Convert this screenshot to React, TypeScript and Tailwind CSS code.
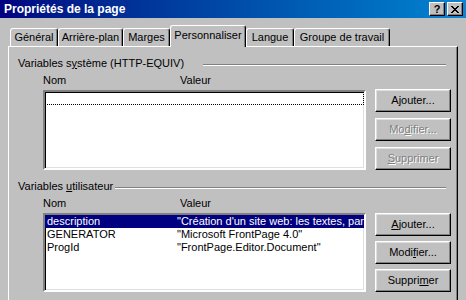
import type { ReactNode } from 'react'

const font = "font-['Liberation_Sans',Arial,sans-serif]"

const tabs = [
  { name: 'Général', w: 'w-[48px]' },
  { name: 'Arrière-plan', w: 'w-[65px]' },
  { name: 'Marges', w: 'w-[47px]' },
  { name: 'Personnaliser', w: 'w-[76px]', active: true },
  { name: 'Langue', w: 'w-[48px]' },
  { name: 'Groupe de travail', w: 'w-[96px]' },
]

const userVars = [
  { name: 'description', value: '"Création d\'un site web: les textes, paragraphes et titres"' },
  { name: 'GENERATOR', value: '"Microsoft FrontPage 4.0"' },
  { name: 'ProgId', value: '"FrontPage.Editor.Document"' },
]

function Btn({ children, disabled }: { children: ReactNode; disabled?: boolean }) {
  return (
    <div
      className={`flex h-[23px] w-[76px] items-center justify-center border border-t-white border-l-white border-r-black border-b-black bg-[#c0c0c0] text-[11px] leading-[13px] shadow-[inset_-1px_-1px_#808080,inset_1px_1px_#dfdfdf] ${
        disabled ? 'text-[#808080] [text-shadow:1px_1px_0_#fff]' : 'text-black'
      }`}
    >
      {children}
    </div>
  )
}

function GroupHeader({ children, gap }: { children: ReactNode; gap: string }) {
  return (
    <div className="mr-[11px] flex items-center">
      <span className="text-[11px] leading-[13px] whitespace-nowrap">{children}</span>
      <div className={`mt-[2px] h-[2px] flex-1 border-t border-t-[#808080] border-b border-b-white ${gap}`} />
    </div>
  )
}

function ColumnHeads() {
  return (
    <div className="mt-[4px] flex pl-[25px] text-[11px] leading-[13px]">
      <span className="w-[137px]">Nom</span>
      <span>Valeur</span>
    </div>
  )
}

export default function App() {
  return (
    <div className={`h-[300px] w-[466px] overflow-hidden bg-[#c0c0c0] text-black ${font}`}>
      {/* Title bar */}
      <div className="flex h-[18px] items-center bg-linear-to-r from-[#000080] to-[#1084d0] pr-[3px] pl-[4px]">
        <span className="flex-1 text-[12px] leading-none font-bold text-white">Propriétés de la page</span>
        <div className="flex gap-[2px]">
          <div className="flex h-[14px] w-[16px] items-center justify-center border border-t-white border-l-white border-r-black border-b-black bg-[#c0c0c0] text-[11px] leading-none font-bold shadow-[inset_-1px_-1px_#808080]">
            ?
          </div>
          <div className="flex h-[14px] w-[16px] items-center justify-center border border-t-white border-l-white border-r-black border-b-black bg-[#c0c0c0] shadow-[inset_-1px_-1px_#808080]">
            <svg width="8" height="7" viewBox="0 0 8 7" shapeRendering="crispEdges">
              <path d="M0 0h2v1h-2zM6 0h2v1h-2zM1 1h2v1h-2zM5 1h2v1h-2zM2 2h4v1h-4zM3 3h2v1h-2zM2 4h4v1h-4zM1 5h2v1h-2zM5 5h2v1h-2zM0 6h2v1h-2zM6 6h2v1h-2z" fill="#000" />
            </svg>
          </div>
        </div>
      </div>

      <div className="px-[8px]">
        {/* Tabs */}
        <div className="flex h-[28px] items-end pl-[2px]">
          {tabs.map((t) =>
            t.active ? (
              <div
                key={t.name}
                className={`relative z-10 -mb-[1px] flex h-[22px] justify-center rounded-t-[3px] border-t border-r border-l border-t-white border-r-black border-l-white bg-[#c0c0c0] pt-[3px] text-[11px] leading-[13px] shadow-[inset_-1px_0_#808080] ${t.w}`}
              >
                {t.name}
              </div>
            ) : (
              <div
                key={t.name}
                className={`flex h-[18px] items-center justify-center rounded-t-[3px] border-t border-r border-l border-t-white border-r-black border-l-white text-[11px] leading-[13px] shadow-[inset_-1px_0_#808080] ${t.w}`}
              >
                {t.name}
              </div>
            ),
          )}
        </div>

        {/* Panel */}
        <div className="h-[270px] border-t border-r border-l border-t-white border-r-black border-l-white pt-[10px] pl-[9px] shadow-[inset_-1px_0_#808080]">
          <GroupHeader gap="ml-[19px]">
            Variables s<u className="underline-offset-[1px]">y</u>stème (HTTP-EQUIV)
          </GroupHeader>
          <ColumnHeads />
          <div className="mt-[2px] flex pl-[25px]">
            <div className="mt-[1px] h-[80px] w-[323px] border-2 border-t-[#808080] border-r-white border-b-white border-l-[#808080] bg-white shadow-[inset_1px_1px_#000,inset_-1px_-1px_#dfdfdf]">
              <div className="h-[13px] border border-dotted border-black" />
            </div>
            <div className="ml-[9px] flex flex-col gap-[6px]">
              <Btn>
                A<u>j</u>outer...
              </Btn>
              <Btn disabled>
                Mo<u>d</u>ifier...
              </Btn>
              <Btn disabled>
                <u>S</u>upprimer
              </Btn>
            </div>
          </div>

          <div className="mt-[10px]">
            <GroupHeader gap="ml-[2px]">
              Variables <u>u</u>tilisateur
            </GroupHeader>
          </div>
          <ColumnHeads />
          <div className="mt-[3px] flex pl-[25px]">
            <div className="h-[79px] w-[323px] overflow-hidden border-2 border-t-[#808080] border-r-white border-b-white border-l-[#808080] bg-white shadow-[inset_1px_1px_#000,inset_-1px_-1px_#dfdfdf]">
              {userVars.map((v, i) => (
                <div
                  key={v.name}
                  className={`flex h-[13px] pl-[2px] text-[11px] leading-[13px] whitespace-nowrap ${
                    i === 0 ? 'bg-[#000080] text-white' : ''
                  }`}
                >
                  <span className="w-[130px] shrink-0">{v.name}</span>
                  <span>{v.value}</span>
                </div>
              ))}
            </div>
            <div className="ml-[9px] flex flex-col gap-[5px]">
              <Btn>
                <u>A</u>jouter...
              </Btn>
              <Btn>
                Modi<u>f</u>ier...
              </Btn>
              <Btn>
                Suppri<u>m</u>er
              </Btn>
            </div>
          </div>
        </div>
      </div>
    </div>
  )
}
